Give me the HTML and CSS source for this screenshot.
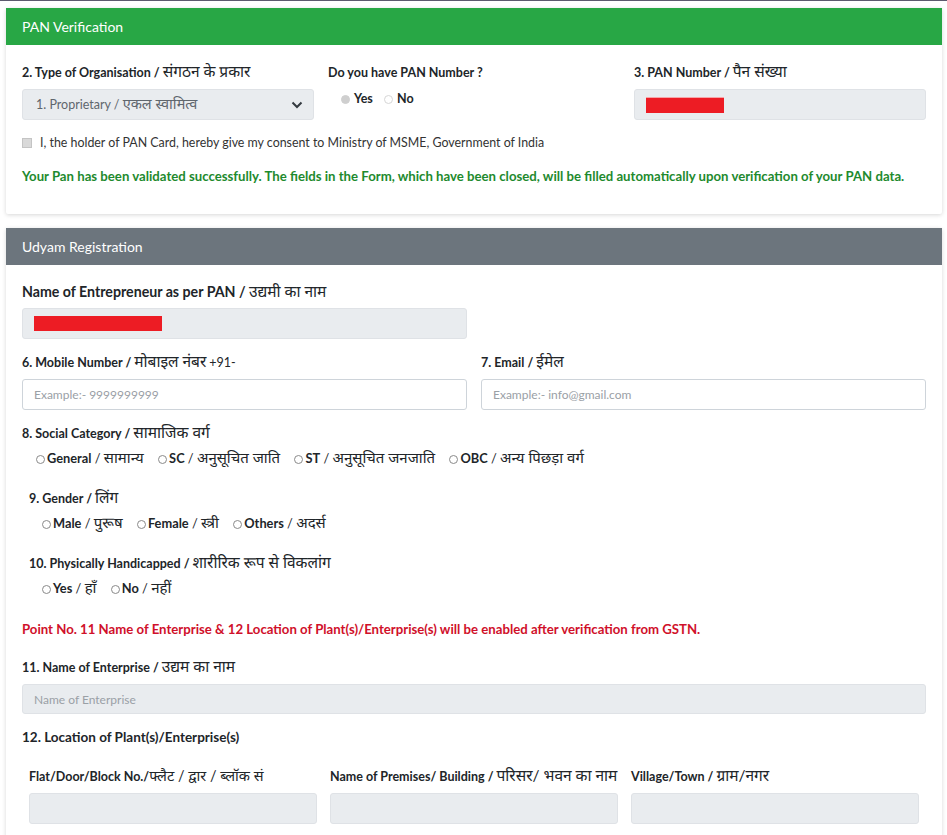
FILE: index.html
```html
<!DOCTYPE html>
<html lang="en">
<head>
<meta charset="utf-8">
<title>Udyam Registration</title>
<link rel="stylesheet" href="styles.css">
</head>
<body>
<div class="topline"></div>
<main class="page">
  <section class="card">
    <header class="card-head green">PAN Verification</header>
    <div class="card-body pan-body">
      <div class="row3">
        <div class="field">
          <label class="lbl">2. Type of Organisation / <span class="hi">संगठन के प्रकार</span></label>
          <div class="select disabled">
            <span>1. Proprietary / <span class="hi">एकल स्वामित्व</span></span>
            <svg class="chev" width="12" height="8" viewBox="0 0 12 8"><path d="M1.5 1.5 L6 6 L10.5 1.5" fill="none" stroke="#343a40" stroke-width="2"/></svg>
          </div>
        </div>
        <div class="field">
          <label class="lbl">Do you have PAN Number ?</label>
          <div class="radios pan-radios">
            <span class="opt"><i class="radio checked"></i><b>Yes</b></span>
            <span class="opt"><i class="radio faint"></i><b>No</b></span>
          </div>
        </div>
        <div class="field">
          <label class="lbl">3. PAN Number / <span class="hi">पैन संख्या</span></label>
          <div class="input disabled"><span class="redact pan-redact"></span></div>
        </div>
      </div>
      <div class="consent"><i class="checkbox"></i><span>I, the holder of PAN Card, hereby give my consent to Ministry of MSME, Government of India</span></div>
      <p class="success">Your Pan has been validated successfully. The fields in the Form, which have been closed, will be filled automatically upon verification of your PAN data.</p>
    </div>
  </section>

  <section class="card card2">
    <header class="card-head gray">Udyam Registration</header>
    <div class="card-body reg-body">
      <div class="row2">
        <div class="field">
          <label class="lbl big">Name of Entrepreneur as per PAN / <span class="hi">उद्यमी का नाम</span></label>
          <div class="input disabled"><span class="redact name-redact"></span></div>
        </div>
      </div>
      <div class="row2 mt-mobile">
        <div class="field">
          <label class="lbl">6. Mobile Number / <span class="hi">मोबाइल नंबर</span> <span class="normal">+91-</span></label>
          <div class="input"><span class="ph">Example:- 9999999999</span></div>
        </div>
        <div class="field">
          <label class="lbl">7. Email / <span class="hi">ईमेल</span></label>
          <div class="input"><span class="ph">Example:- info@gmail.com</span></div>
        </div>
      </div>

      <div class="group social">
        <label class="lbl">8. Social Category / <span class="hi">सामाजिक वर्ग</span></label>
        <div class="radios r-social">
          <span class="opt"><i class="radio"></i><b>General</b> / <span class="hi">सामान्य</span></span>
          <span class="opt"><i class="radio"></i><b>SC</b> / <span class="hi">अनुसूचित जाति</span></span>
          <span class="opt"><i class="radio"></i><b>ST</b> / <span class="hi">अनुसूचित जनजाति</span></span>
          <span class="opt"><i class="radio"></i><b>OBC</b> / <span class="hi">अन्य पिछड़ा वर्ग</span></span>
        </div>
      </div>

      <div class="group indent gender">
        <label class="lbl">9. Gender / <span class="hi">लिंग</span></label>
        <div class="radios r-gender">
          <span class="opt"><i class="radio"></i><b>Male</b> / <span class="hi">पुरूष</span></span>
          <span class="opt"><i class="radio"></i><b>Female</b> / <span class="hi">स्त्री</span></span>
          <span class="opt"><i class="radio"></i><b>Others</b> / <span class="hi">अदर्स</span></span>
        </div>
      </div>

      <div class="group indent ph-group">
        <label class="lbl">10. Physically Handicapped / <span class="hi">शारीरिक रूप से विकलांग</span></label>
        <div class="radios r-ph">
          <span class="opt"><i class="radio"></i><b>Yes</b> / <span class="hi">हाँ</span></span>
          <span class="opt"><i class="radio"></i><b>No</b> / <span class="hi">नहीं</span></span>
        </div>
      </div>

      <p class="notice">Point No. 11 Name of Enterprise &amp; 12 Location of Plant(s)/Enterprise(s) will be enabled after verification from GSTN.</p>

      <div class="field ent">
        <label class="lbl">11. Name of Enterprise / <span class="hi">उद्यम का नाम</span></label>
        <div class="input disabled thin"><span class="ph">Name of Enterprise</span></div>
      </div>

      <label class="lbl loc">12. Location of Plant(s)/Enterprise(s)</label>

      <div class="row3 loc-row">
        <div class="field">
          <label class="lbl">Flat/Door/Block No./<span class="hi hi-sm">फ्लैट / द्वार / ब्लॉक सं</span></label>
          <div class="input disabled"></div>
        </div>
        <div class="field">
          <label class="lbl">Name of Premises/ Building / <span class="hi">परिसर/ भवन का नाम</span></label>
          <div class="input disabled"></div>
        </div>
        <div class="field">
          <label class="lbl">Village/Town / <span class="hi">ग्राम/नगर</span></label>
          <div class="input disabled"></div>
        </div>
      </div>
    </div>
  </section>
</main>
</body>
</html>
```

FILE: styles.css
```css
* { box-sizing: border-box; }
html, body {
  margin: 0;
  background: #ffffff;
  font-family: "Lato", "Noto Sans Devanagari", "Noto Sans", sans-serif;
  color: #212529;
  font-size: 12px;
}
.topline { height: 1px; background: #5c5a6e; }
.page { padding: 7px 5px 0 6px; }

.card {
  background: #fff;
  box-shadow: 0 1px 4px rgba(0,0,0,0.16);
  border-radius: 2px;
}
.card2 { margin-top: 14px; }
.card-head {
  height: 37px;
  line-height: 37px;
  padding: 0 16px;
  color: #fff;
  font-size: 14px;
}
.green { background: #28a745; }
.gray { background: #6c757d; }

.card-body { padding: 0 16px; }
.pan-body { padding-top: 19px; padding-bottom: 29px; }
.reg-body { padding-top: 18px; padding-bottom: 20px; }

.row3 {
  display: grid;
  grid-template-columns: repeat(3, 1fr);
  column-gap: 14px;
}
.row2 {
  display: grid;
  grid-template-columns: repeat(2, 1fr);
  column-gap: 14px;
}
.field { display: flex; flex-direction: column; }
.lbl {
  display: block;
  font-weight: 700;
  font-size: 12.5px;
  line-height: 18px;
  color: #212529;
  white-space: nowrap;
}
.lbl.big { font-size: 14.2px; }
.hi { font-weight: 400; font-size: 15.5px; line-height: 1; }
.hi-sm { font-size: 14.5px; }
.lbl.big .hi { font-size: 15.5px; }
.normal { font-weight: 400; }

.field .lbl { margin-bottom: 7px; }

.select, .input {
  height: 31px;
  border: 1px solid #ced4da;
  border-radius: 3px;
  background: #fff;
  display: flex;
  align-items: center;
  padding: 0 11px;
  font-size: 12px;
}
.input.thin { height: 30px; }
.disabled { background: #e9ecef; border-color: #dfe2e6; }
.select { justify-content: space-between; color: #5f666d; padding-left: 13px; padding-right: 10px; font-size: 12.5px; }
.select .hi { font-size: 14.5px; }
.chev { display: block; }

.ph { color: #9aa0a6; }
.redact { display: block; background: #ed1c24; height: 16px; }
.pan-redact { width: 78px; border-top: 1px solid #f6a5a8; }
.name-redact { width: 128px; height: 15px; }

.radios { display: block; font-size: 12.8px; line-height: 18px; white-space: nowrap; }
.radios .hi { font-size: 15px; }
.opt { display: inline-block; white-space: nowrap; color: #212529; }
.opt b { font-weight: 700; }
.radio {
  display: inline-block;
  width: 9px; height: 9px;
  border: 1px solid #8a8a8a;
  border-radius: 50%;
  margin-right: 2px;
  background: #fff;
  vertical-align: -1px;
}
.radio.checked { background: #cfcfcf; border-color: #cfcfcf; }
.radio.faint { border-color: #d6d6d6; }

.pan-radios { padding-left: 13px; margin-top: 1px; font-size: 12.5px; }
.pan-radios .opt + .opt { margin-left: 8px; }
.pan-radios .radio { margin-right: 4px; }

.consent {
  display: flex;
  align-items: center;
  margin-top: 14px;
  font-size: 12.4px;
  color: #333;
  line-height: 18px;
}
.checkbox {
  width: 10px; height: 10px;
  background: #d9d9d9;
  border: 1px solid #c4c4c4;
  margin-right: 8px;
}
.success {
  margin: 15px 0 0;
  color: #1e8a2e;
  font-weight: 700;
  font-size: 13.2px;
  line-height: 18px;
}

.mt-mobile { margin-top: 15px; }
.group .lbl { margin-bottom: 6px; }
.social { margin-top: 15px; }
.r-social { padding-left: 14px; }
.indent { padding-left: 7px; }
.gender { margin-top: 23px; }
.ph-group { margin-top: 23px; }
.r-gender, .r-ph { padding-left: 13px; }
.r-social .opt + .opt { margin-left: 11px; }
.r-gender .opt + .opt { margin-left: 11px; }
.r-ph .opt + .opt { margin-left: 11px; }

.notice {
  margin: 23px 0 0;
  color: #d0102a;
  font-weight: 700;
  font-size: 13.2px;
  line-height: 18px;
}
.ent { margin-top: 21px; }
.loc { margin-top: 14px; font-size: 13.5px; }
.loc-row { margin-top: 22px; padding-left: 7px; padding-right: 7px; column-gap: 13px; }
```
